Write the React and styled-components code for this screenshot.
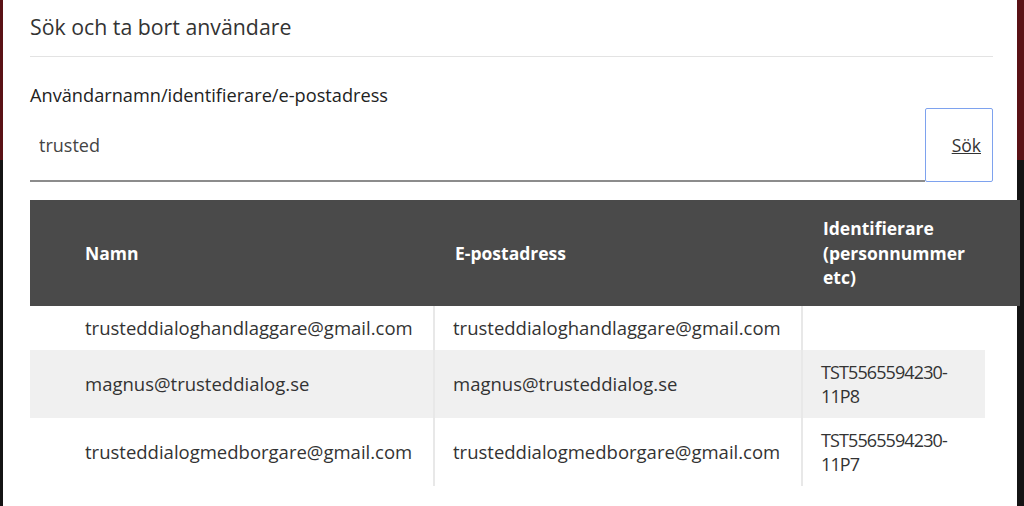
import React from "react";
import styled, { createGlobalStyle } from "styled-components";

const Global = createGlobalStyle`
  html, body { margin: 0; padding: 0; }
  body {
    width: 1024px;
    height: 506px;
    overflow: hidden;
    background: #2b2b2b;
    font-family: "Open Sans", "Noto Sans", sans-serif;
  }
`;

const Backdrop = styled.div`
  display: flex;
  height: 506px;
  background: linear-gradient(to bottom, #5a1216 0, #5a1216 160px, #141414 160px);
`;

const Modal = styled.div`
  margin-left: 3px;
  width: 1014px;
  background: #fff;
  padding: 0 24px 0 27px;
  box-sizing: border-box;
  display: flex;
  flex-direction: column;
`;

const Title = styled.h2`
  margin: 0;
  padding-top: 13px;
  height: 57px;
  box-sizing: border-box;
  font-size: 21.3px;
  font-weight: 400;
  color: #333;
  line-height: 28px;
  border-bottom: 1px solid #e3e3e3;
`;

const Label = styled.label`
  display: block;
  margin-top: 26px;
  font-size: 18.2px;
  line-height: 24px;
  color: #222;
`;

const SearchRow = styled.div`
  display: flex;
  height: 74px;
  margin-top: 1px;
`;

const Input = styled.input`
  flex: 1;
  border: none;
  border-bottom: 2px solid #8c8c8c;
  padding: 2px 0 0 9px;
  font: inherit;
  font-size: 18px;
  color: #444;
  outline: none;
  background: #fff;
`;

const SearchButton = styled.button`
  width: 68px;
  border: 1px solid #7ea2ee;
  border-radius: 2px;
  background: #fff;
  font: inherit;
  font-size: 17.5px;
  color: #333;
  text-decoration: underline;
  text-align: right;
  padding: 0 11px 0 0;
`;

const Table = styled.div`
  margin-top: 18px;
  width: 990px;
  display: grid;
  grid-template-columns: 403px 368px 184px 35px;
`;

const HeadCell = styled.div`
  background: #4a4a4a;
  color: #fff;
  font-weight: 700;
  font-size: 17.5px;
  line-height: 24.5px;
  height: 106px;
  box-sizing: border-box;
  display: flex;
  align-items: center;
  padding-left: ${(p) => p.$pad}px;
  padding-right: 6px;
`;

const Cell = styled.div`
  font-size: ${(p) => (p.$code ? 18 : 18.5)}px;
  letter-spacing: ${(p) => (p.$code ? "-0.9px" : "normal")};
  line-height: 24px;
  color: #333;
  padding: 10px ${(p) => (p.$code ? 30 : 8)}px 10px ${(p) => p.$pad}px;
  display: flex;
  align-items: center;
  background: ${(p) => (p.$striped ? "#f0f0f0" : "transparent")};
  border-left: ${(p) => (p.$divider ? "2px solid #e8e8e8" : "none")};
  word-break: break-word;
  min-height: ${(p) => (p.$tall ? 48 : 24)}px;
`;

const Spacer = styled.div``;

const rows = [
  { name: "trusteddialoghandlaggare@gmail.com", email: "trusteddialoghandlaggare@gmail.com", id: "" },
  { name: "magnus@trusteddialog.se", email: "magnus@trusteddialog.se", id: "TST5565594230-11P8" },
  { name: "trusteddialogmedborgare@gmail.com", email: "trusteddialogmedborgare@gmail.com", id: "TST5565594230-11P7" },
];

export default function App() {
  return (
    <>
      <Global />
      <Backdrop>
        <Modal>
          <Title>Sök och ta bort användare</Title>
          <Label>Användarnamn/identifierare/e-postadress</Label>
          <SearchRow>
            <Input defaultValue="trusted" />
            <SearchButton>Sök</SearchButton>
          </SearchRow>
          <Table>
            <HeadCell $pad={55}>Namn</HeadCell>
            <HeadCell $pad={22}>E-postadress</HeadCell>
            <HeadCell $pad={22}>Identifierare (personnummer etc)</HeadCell>
            <HeadCell $pad={0} />
            {rows.map((r, i) => (
              <React.Fragment key={i}>
                <Cell $pad={55} $striped={i === 1} $tall={i > 0}>{r.name}</Cell>
                <Cell $pad={18} $striped={i === 1} $divider>{r.email}</Cell>
                <Cell $pad={18} $striped={i === 1} $divider $code>{r.id}</Cell>
                <Spacer />
              </React.Fragment>
            ))}
          </Table>
        </Modal>
      </Backdrop>
    </>
  );
}
